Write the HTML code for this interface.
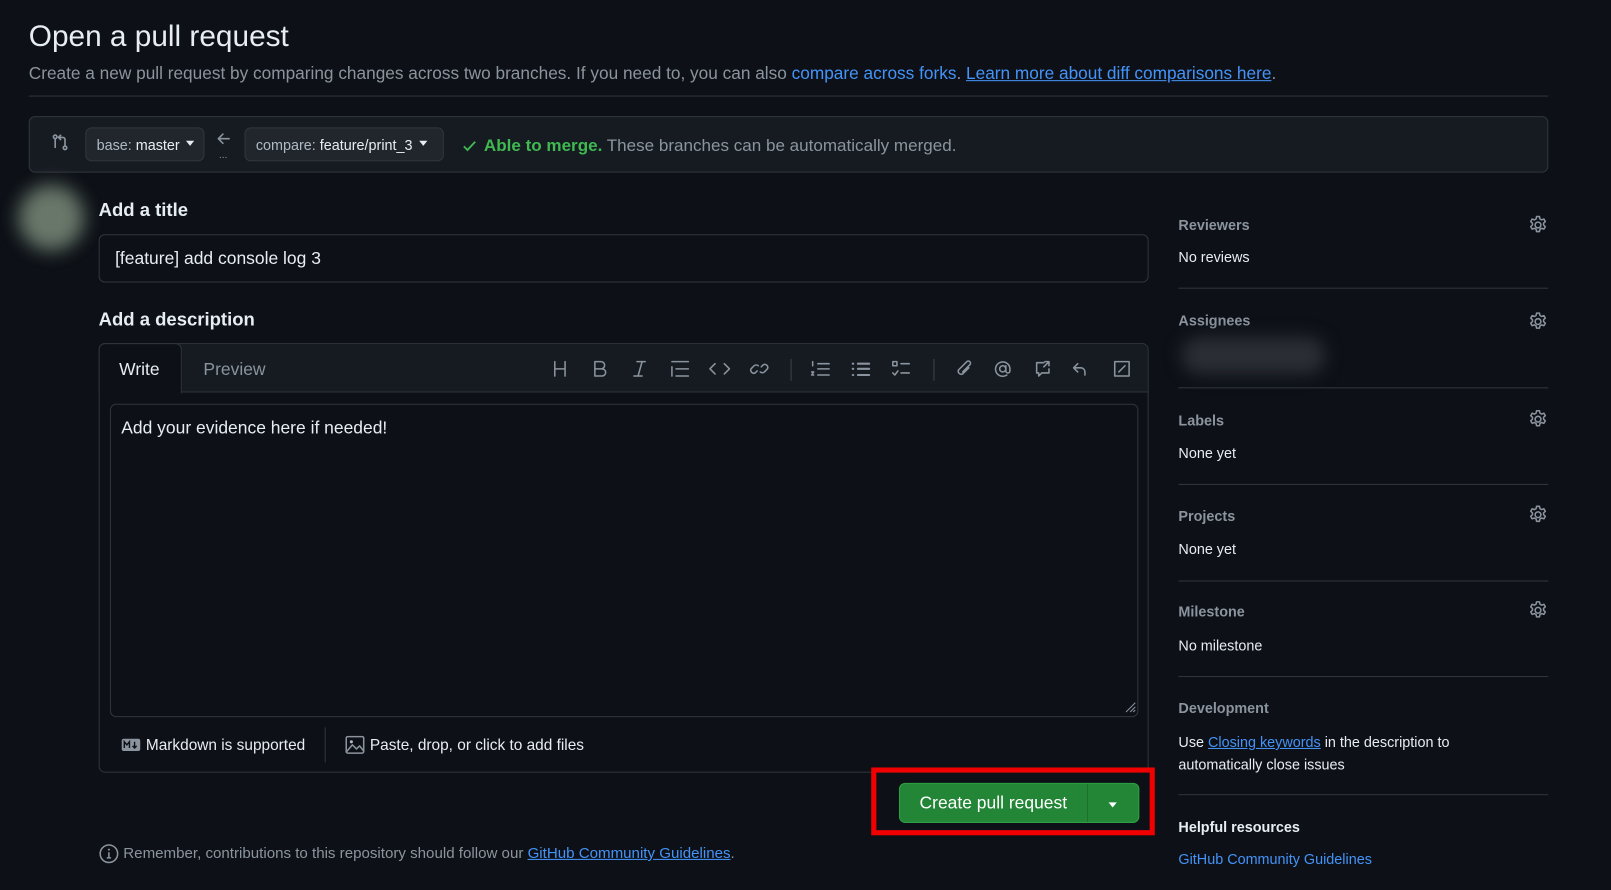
<!DOCTYPE html>
<html><head><meta charset="utf-8"><style>
*{box-sizing:border-box;margin:0;padding:0}
body{width:1611px;height:890px;background:#0d1117;color:#e6edf3;font-family:"Liberation Sans",sans-serif;position:relative;overflow:hidden}
#w{position:absolute;left:0;top:0;width:1568px;height:866px;transform:scale(1.0274);transform-origin:0 0}
.a{position:absolute;white-space:nowrap}
a{color:#4493f8;text-decoration:none}
.u{text-decoration:underline}
.btn{position:absolute;background:#21262d;border:1px solid #30363d;border-radius:6px;font-size:14px;color:#e6edf3;display:flex;align-items:center;padding:0 10px}
.btn span{color:#b1bac4}
.caret{display:inline-block;width:0;height:0;border-left:4px solid transparent;border-right:4px solid transparent;border-top:5px solid #e6edf3;margin-left:6px;margin-top:-3px}
.sh{font-size:14px;color:#8b949e;font-weight:bold}
.sv{font-size:14px;color:#e6edf3}
.sep{position:absolute;left:1147px;width:360px;height:1px;background:#30363d}
svg{position:absolute}
.ic{stroke:#8b949e;fill:none;stroke-width:1.5;stroke-linecap:round;stroke-linejoin:round}
</style></head><body><div id="w">
<div class="a" style="left:28px;top:20px;font-size:29px">Open a pull request</div>
<div class="a" style="left:28px;top:62px;font-size:16.8px;color:#8b949e">Create a new pull request by comparing changes across two branches. If you need to, you can also <a>compare across forks</a>. <a class="u">Learn more about diff comparisons here</a>.</div>
<div class="a" style="left:28px;top:93px;width:1479px;height:1px;background:#30363d"></div>
<div class="a" style="left:28px;top:113px;width:1479px;height:55px;background:#161b22;border:1px solid #30363d;border-radius:6px"></div>
<svg style="left:50px;top:130px" width="17" height="17" viewBox="0 0 16 16"><g class="ic" stroke="#8b949e"><circle cx="3.5" cy="3" r="1.6"/><path d="M3.5 4.6v8"/><circle cx="12.5" cy="13" r="1.6"/><path d="M12.5 11.4V5.5a2 2 0 0 0-2-2H7M8.5 1.5l-2 2 2 2"/></g></svg>
<div class="btn" style="left:83px;top:124px;width:116px;height:33px"><span>base:</span>&nbsp;master<i class="caret"></i></div>
<svg style="left:210px;top:128px" width="16" height="14" viewBox="0 0 16 14"><path class="ic" d="M13 7H3M7 2.5 2.5 7 7 11.5"/></svg>
<div class="a" style="left:213px;top:146px;font-size:10px;color:#8b949e">...</div>
<div class="btn" style="left:238px;top:124px;width:194px;height:33px"><span>compare:</span>&nbsp;feature/print_3<i class="caret"></i></div>
<svg style="left:449px;top:134px" width="16" height="16" viewBox="0 0 16 16"><path d="M2.5 8.5l3.5 3.5 7.5-8" stroke="#3fb950" stroke-width="1.8" fill="none"/></svg>
<div class="a" style="left:471px;top:132px;font-size:16.6px;color:#8b949e"><b style="color:#3fb950">Able to merge.</b> These branches can be automatically merged.</div>
<div class="a" style="left:18px;top:180px;width:64px;height:64px;border-radius:50%;background:#7a8a7a;filter:blur(9px);opacity:.85"></div>
<div class="a" style="left:96px;top:194px;font-size:18px;font-weight:bold">Add a title</div>
<div class="a" style="left:96px;top:228px;width:1022px;height:47px;border:1px solid #30363d;border-radius:6px;background:#0d1117;font-size:17px;padding:13px 15px">[feature] add console log 3</div>
<div class="a" style="left:96px;top:301px;font-size:18px;font-weight:bold">Add a description</div>
<div class="a" style="left:96px;top:334px;width:1022px;height:418px;border:1px solid #30363d;border-radius:6px;background:#0d1117"></div>
<div class="a" style="left:97px;top:335px;width:1020px;height:47px;background:#161b22;border-bottom:1px solid #30363d;border-radius:6px 6px 0 0"></div>
<div class="a" style="left:96px;top:334px;width:81px;height:49px;background:#0d1117;border:1px solid #30363d;border-bottom:none;border-radius:6px 6px 0 0;font-size:17px;padding:15px 0 0 19px">Write</div>
<div class="a" style="left:198px;top:350px;font-size:17px;color:#8b949e">Preview</div>
<svg style="left:530px;top:346px" width="580" height="26" viewBox="0 0 580 26"><g class="ic">
<path d="M10 6v14M20 6v14M10 13h10"/>
<path d="M49 6h6a3.5 3.5 0 0 1 0 7h-6zM49 13h7a3.5 3.5 0 0 1 0 7h-7z"/>
<path d="M90 6h8M87 20h8M95 6l-4 14"/>
<path d="M124 6h16M128 13h12M128 20h12M124 11v9"/>
<path d="M166 8l-5 5 5 5M175 8l5 5-5 5"/>
<path d="M207 15l-2 2a3 3 0 0 1-4-4l3-3a3 3 0 0 1 4 0M211 11l2-2a3 3 0 0 1 4 4l-3 3a3 3 0 0 1-4 0"/>
<path d="M240 4v20" stroke="#30363d"/>
<path d="M266 8h11M266 13h11M266 19h11M261 6v4M260 16h2l-2 3h2"/>
<path d="M305 8h11M305 13h11M305 19h11M300 8h.5M300 13h.5M300 19h.5" stroke-width="2"/>
<path d="M339 6h4v4h-4zM347 8h8M347 17h8M339 17l2 2 3-4"/>
<path d="M379 4v20" stroke="#30363d"/>
<path d="M413 12l-6 6a3 3 0 0 1-4-4l8-8a2 2 0 0 1 3 3l-7 7"/>
<circle cx="446" cy="13" r="3"/><path d="M449 10v5a2 2 0 0 0 4 0v-2a7 7 0 1 0-3 6"/>
<path d="M486 7h-7v10h2v3l3-3h7v-4M487 6h4v4M491 6l-5 5"/>
<path d="M519 8l-4 4 4 4M515 12h7a4 4 0 0 1 4 4v3"/>
<path d="M555 6h14v14h-14zM559 16l6-6"/>
</g></svg>
<div class="a" style="left:107px;top:393px;width:1001px;height:305px;border:1px solid #30363d;border-radius:6px;font-size:17px;padding:13px 10px">Add your evidence here if needed!</div>
<svg style="left:1094px;top:682px" width="12" height="12" viewBox="0 0 12 12"><path d="M11 2 2 11M11 6 6 11M11 9 9 11" stroke="#8b949e"/></svg>
<svg style="left:118px;top:718px" width="19" height="14" viewBox="0 0 19 14"><rect x="0.5" y="1" width="18" height="12" rx="2" fill="#8b949e"/><path d="M3 10V4l2.5 3L8 4v6M13 4v6M11 8l2 2 2-2" stroke="#0d1117" stroke-width="1.4" fill="none"/></svg>
<div class="a" style="left:142px;top:717px;font-size:15px">Markdown is supported</div>
<div class="a" style="left:316px;top:708px;width:1px;height:34px;background:#30363d"></div>
<svg style="left:336px;top:716px" width="19" height="18" viewBox="0 0 19 18"><rect x="1" y="1" width="17" height="16" rx="1.5" class="ic" stroke="#b1bac4"/><circle cx="6" cy="6" r="1.5" fill="#b1bac4"/><path d="M1 16l6-7 4 4 3-3 4 5" class="ic" stroke="#b1bac4"/></svg>
<div class="a" style="left:360px;top:717px;font-size:15px">Paste, drop, or click to add files</div>
<div class="a" style="left:848px;top:747px;width:276px;height:66px;border:5px solid #f00000"></div>
<div class="a" style="left:875px;top:762px;width:234px;height:39px;background:#238636;border-radius:6px;border:1px solid #2ea043"></div>
<div class="a" style="left:1058px;top:763px;width:1px;height:37px;background:#1f6f2e"></div>
<div class="a" style="left:895px;top:772px;font-size:17px;color:#fff">Create pull request</div>
<div class="a" style="left:1079px;top:781px;border-left:4px solid transparent;border-right:4px solid transparent;border-top:5px solid #fff"></div>
<svg style="left:96px;top:821px" width="20" height="20" viewBox="0 0 20 20"><circle cx="10" cy="10" r="8.5" class="ic"/><path d="M10 9v5M8.5 14h3" class="ic"/><circle cx="10" cy="6" r="1" fill="#8b949e"/></svg>
<div class="a" style="left:120px;top:823px;font-size:14.7px;color:#8b949e">Remember, contributions to this repository should follow our <a class="u">GitHub Community Guidelines</a>.</div>

<div class="a sh" style="left:1147px;top:211px">Reviewers</div>
<div class="a sv" style="left:1147px;top:242px">No reviews</div>
<div class="sep" style="top:280px"></div>
<div class="a sh" style="left:1147px;top:304px">Assignees</div>
<div class="a" style="left:1150px;top:328px;width:140px;height:36px;border-radius:18px;background:#2a2e35;filter:blur(8px)"></div>
<div class="sep" style="top:377px"></div>
<div class="a sh" style="left:1147px;top:401px">Labels</div>
<div class="a sv" style="left:1147px;top:433px">None yet</div>
<div class="sep" style="top:471px"></div>
<div class="a sh" style="left:1147px;top:494px">Projects</div>
<div class="a sv" style="left:1147px;top:526px">None yet</div>
<div class="sep" style="top:565px"></div>
<div class="a sh" style="left:1147px;top:587px">Milestone</div>
<div class="a sv" style="left:1147px;top:620px">No milestone</div>
<div class="sep" style="top:658px"></div>
<div class="a sh" style="left:1147px;top:681px">Development</div>
<div class="a sv" style="left:1147px;top:711px;line-height:22px;white-space:normal;width:300px">Use <a class="u">Closing keywords</a> in the description to automatically close issues</div>
<div class="sep" style="top:773px"></div>
<div class="a" style="left:1147px;top:797px;font-size:14px;font-weight:bold">Helpful resources</div>
<div class="a" style="left:1147px;top:828px;font-size:14px"><a>GitHub Community Guidelines</a></div>
<svg width="0" height="0"><defs><g id="gear"><circle cx="10" cy="10" r="2.8" class="ic"/><path class="ic" d="M8.6 1.8h2.8l.5 2.3 1.6.9 2.2-.8 1.4 2.4-1.7 1.6v1.8l1.7 1.6-1.4 2.4-2.2-.8-1.6.9-.5 2.3H8.6l-.5-2.3-1.6-.9-2.2.8-1.4-2.4 1.7-1.6V8.2L2.9 6.6l1.4-2.4 2.2.8 1.6-.9z"/></g></defs></svg>
<svg style="left:1487px;top:209px" width="20" height="20"><use href="#gear"/></svg>
<svg style="left:1487px;top:303px" width="20" height="20"><use href="#gear"/></svg>
<svg style="left:1487px;top:398px" width="20" height="20"><use href="#gear"/></svg>
<svg style="left:1487px;top:491px" width="20" height="20"><use href="#gear"/></svg>
<svg style="left:1487px;top:584px" width="20" height="20"><use href="#gear"/></svg>
</div></body></html>
